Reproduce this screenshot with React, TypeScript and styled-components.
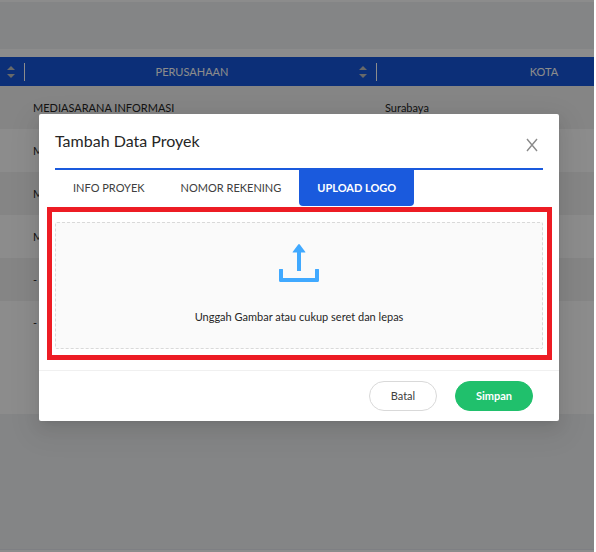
import React, { useState } from "react";
import styled, { createGlobalStyle } from "styled-components";

const GlobalStyle = createGlobalStyle`
  *, *::before, *::after { box-sizing: border-box; }
  body {
    margin: 0;
    overflow: hidden;
    background: #fff;
    font-family: Lato, "Liberation Sans", sans-serif;
    font-size: 11px;
    line-height: 18px;
    color: #262626;
  }
  button, input { font: inherit; }
`;

const Page = styled.div`
  position: relative;
  min-height: 100vh;
  margin-right: 2px;
  overflow: hidden;
`;

const Band = styled.div<{ $height: number }>`
  height: ${(p) => p.$height}px;
  background: #f0f2f5;
`;

const FilterBand = styled(Band)`
  margin: 2px 0 8px;
`;

const BottomBand = styled(Band)`
  border-bottom: 1px solid #e6e8ee;
`;

const TableArea = styled.div`
  padding-bottom: 70px;
  overflow: hidden;
`;

const Table = styled.table`
  table-layout: fixed;
  width: 729px;
  border-collapse: collapse;
`;

const Col = styled.col<{ $width: number }>`
  width: ${(p) => p.$width}px;
`;

const HeadCell = styled.th`
  height: 29px;
  padding: 0;
  background: #1657da;
  color: #fff;
  font-weight: 400;
`;

const HeadContent = styled.div`
  display: flex;
  align-items: center;
  height: 18px;
  padding-right: 9px;
  border-right: 1px solid #fff;
`;

const HeadLabel = styled.span`
  flex: 1;
  text-align: center;
`;

const SortButton = styled.button`
  display: flex;
  padding: 0;
  border: 0;
  background: none;
`;

const Row = styled.tr`
  height: 43px;
  &:nth-child(odd) { background: #f2f2f2; }
`;

const Cell = styled.td`
  padding: 0 8px;
  white-space: nowrap;
`;

const Mask = styled.div`
  position: absolute;
  inset: 0;
  display: flex;
  align-items: flex-start;
  justify-content: center;
  padding: 114px 0 0 4px;
  background: rgba(0, 0, 0, 0.45);
`;

const Dialog = styled.section`
  width: 100%;
  max-width: 520px;
  border-radius: 2px;
  background: #fff;
  box-shadow: 0 3px 6px -4px rgba(0, 0, 0, 0.12), 0 6px 16px rgba(0, 0, 0, 0.08),
    0 9px 28px 8px rgba(0, 0, 0, 0.05);
`;

const DialogHeader = styled.header`
  display: flex;
  justify-content: space-between;
  height: 54px;
  padding: 15px 20px 0 16px;
`;

const Title = styled.h1`
  margin: 0;
  font-size: 16px;
  font-weight: 400;
  line-height: 24px;
`;

const CloseButton = styled.button`
  display: flex;
  align-items: center;
  margin-top: 4px;
  height: 24px;
  padding: 0;
  border: 0;
  background: none;
`;

const TabList = styled.div`
  display: flex;
  height: 38px;
  margin: 0 16px;
  border-top: 2px solid #1a5add;
`;

const Tab = styled.button<{ $active: boolean }>`
  padding: 0 18px;
  border: 0;
  border-radius: 0 0 4px 4px;
  background: ${(p) => (p.$active ? "#1a5add" : "transparent")};
  color: ${(p) => (p.$active ? "#fff" : "#404040")};
  font-weight: ${(p) => (p.$active ? 700 : 400)};
`;

const Highlight = styled.div`
  margin: 1px 7px 10px 8px;
  padding: 10px 4px 6px 3px;
  border: 5px solid #ed1c24;
`;

const DropZone = styled.label`
  display: flex;
  flex-direction: column;
  align-items: center;
  gap: 26px;
  padding: 21px 16px;
  height: 127px;
  border: 1px dashed #d9d9d9;
  border-radius: 2px;
  background: #fafafa;
  cursor: pointer;
`;

const FileInput = styled.input`
  position: absolute;
  width: 1px;
  height: 1px;
  opacity: 0;
`;

const DialogFooter = styled.footer`
  display: flex;
  justify-content: flex-end;
  gap: 18px;
  padding: 10px 26px;
  border-top: 1px solid #f0f0f0;
`;

const PillButton = styled.button<{ $primary?: boolean }>`
  min-width: 68px;
  height: 30px;
  padding: 0 20px;
  border: 1px solid ${(p) => (p.$primary ? "#20c06c" : "#d9d9d9")};
  border-radius: 15px;
  background: ${(p) => (p.$primary ? "#20c06c" : "#fff")};
  color: ${(p) => (p.$primary ? "#fff" : "#404040")};
  font-weight: ${(p) => (p.$primary ? 700 : 400)};
`;

const SortIcon = () => (
  <svg width="8" height="14" viewBox="0 0 8 14" fill="#bfbfbf" aria-hidden="true">
    <path d="M4 1 8 5H0zM0 9h8l-4 4z" />
  </svg>
);

const CloseIcon = () => (
  <svg width="13" height="14" viewBox="0 0 13 14" fill="none" stroke="#8a8a8a" strokeWidth="1.4" aria-hidden="true">
    <path d="M1 1 11 13M11 1 1 13" />
  </svg>
);

const UploadIcon = () => (
  <svg width="40" height="38" viewBox="0 0 40 38" fill="#40a9ff" aria-hidden="true">
    <path d="M20 0q.5 0 .8.4L26.2 7.700q.6.9-.5.9H22V27h-4V8.600h-3.700q-1.100 0-.5-.9L19.200.4Q19.500 0 20 0z" />
    <path d="M0 25.500Q0 25 .5 25h3q.5 0 .5.500V34h32v-8.500q0-.5.5-.5h3q.5 0 .5.500V36.400q0 1.600-1.600 1.600H1.600Q0 38 0 36.400z" />
  </svg>
);

const rows = [
  { company: "MEDIASARANA INFORMASI", city: "Surabaya" },
  { company: "M", city: "" },
  { company: "M", city: "" },
  { company: "M", city: "" },
  { company: "-", city: "" },
  { company: "-", city: "" },
];

const tabs = ["INFO PROYEK", "NOMOR REKENING", "UPLOAD LOGO"];
const heads = ["", "PERUSAHAAN", "KOTA"];

export default function App() {
  const [active, setActive] = useState(2);
  return (
    <>
      <GlobalStyle />
      <Page>
        <FilterBand $height={47} />
        <TableArea>
          <Table>
            <colgroup>
              <Col $width={25} />
              <Col $width={352} />
              <Col $width={352} />
            </colgroup>
            <thead>
              <tr>
                {heads.map((h) => (
                  <HeadCell key={h} scope="col">
                    <HeadContent>
                      <HeadLabel>{h}</HeadLabel>
                      <SortButton type="button" aria-label={`Urutkan ${h}`}>
                        <SortIcon />
                      </SortButton>
                    </HeadContent>
                  </HeadCell>
                ))}
              </tr>
            </thead>
            <tbody>
              {rows.map((r, i) => (
                <Row key={i}>
                  <Cell />
                  <Cell>{r.company}</Cell>
                  <Cell>{r.city}</Cell>
                </Row>
              ))}
            </tbody>
          </Table>
        </TableArea>
        <BottomBand $height={136} />
        <Mask>
          <Dialog role="dialog" aria-modal="true" aria-labelledby="dialog-title">
            <DialogHeader>
              <Title id="dialog-title">Tambah Data Proyek</Title>
              <CloseButton type="button" aria-label="Tutup">
                <CloseIcon />
              </CloseButton>
            </DialogHeader>
            <TabList role="tablist">
              {tabs.map((t, i) => (
                <Tab
                  key={t}
                  type="button"
                  role="tab"
                  aria-selected={i === active}
                  $active={i === active}
                  onClick={() => setActive(i)}
                >
                  {t}
                </Tab>
              ))}
            </TabList>
            <Highlight>
              <DropZone>
                <UploadIcon />
                <span>Unggah Gambar atau cukup seret dan lepas</span>
                <FileInput type="file" accept="image/*" />
              </DropZone>
            </Highlight>
            <DialogFooter>
              <PillButton type="button">Batal</PillButton>
              <PillButton type="button" $primary>
                Simpan
              </PillButton>
            </DialogFooter>
          </Dialog>
        </Mask>
      </Page>
    </>
  );
}
